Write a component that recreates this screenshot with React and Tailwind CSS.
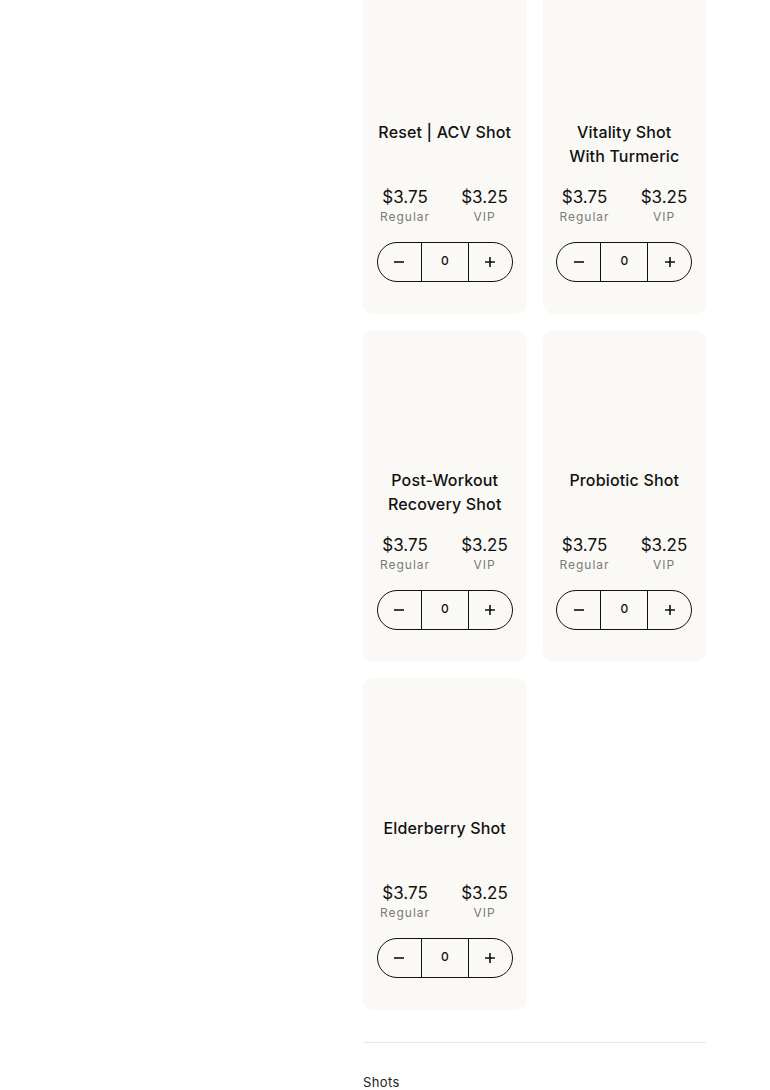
import React from "react";

const products = [
  { name: "Reset | ACV Shot" },
  { name: "Vitality Shot With Turmeric" },
  { name: "Post-Workout Recovery Shot" },
  { name: "Probiotic Shot" },
  { name: "Elderberry Shot" },
];

function Card({ name }) {
  return (
    <div className="flex h-[332px] flex-col items-center rounded-[10px] bg-[#faf9f6] px-[14px]">
      <div className="h-[138px] w-full shrink-0" />
      <div className="flex h-[48px] w-full items-start justify-center text-center text-[16px] font-medium leading-[24px] tracking-[0.01em] text-balance text-[#111]">
        {name}
      </div>
      <div className="mt-[19px] flex w-full justify-between px-[5px]">
        <div className="flex w-[46px] flex-col items-center">
          <span className="text-[17px] leading-[20px] text-[#111]">$3.75</span>
          <span className="text-[12px] leading-[20px] tracking-[0.08em] text-[#7a7a7a]">Regular</span>
        </div>
        <div className="flex w-[46px] flex-col items-center">
          <span className="text-[17px] leading-[20px] text-[#111]">$3.25</span>
          <span className="text-[12px] leading-[20px] tracking-[0.08em] text-[#7a7a7a]">VIP</span>
        </div>
      </div>
      <div className="mt-[15px] flex h-[40px] w-[136px] items-stretch rounded-full border border-[#111]">
        <button className="flex w-[44px] items-center justify-center border-r border-[#111]">
          <svg width="12" height="12" viewBox="0 0 12 12"><path d="M1 6h10" stroke="#111" strokeWidth="1.6" /></svg>
        </button>
        <div className="flex w-[46px] items-center justify-center pb-[3px] text-[12px] font-medium text-[#111]">0</div>
        <button className="flex flex-1 items-center justify-center border-l border-[#111]">
          <svg width="12" height="12" viewBox="0 0 12 12"><path d="M1 6h10M6 1v10" stroke="#111" strokeWidth="1.6" /></svg>
        </button>
      </div>
    </div>
  );
}

export default function App() {
  return (
    <div className="min-h-[1090px] overflow-hidden bg-white" style={{ fontFamily: "Inter, 'Noto Sans', sans-serif" }}>
      <div className="-mt-[18px] flex">
        <div className="w-[363px] shrink-0" />
        <div className="w-[343px]">
          <div className="grid grid-cols-2 gap-4">
            {products.map((p) => (
              <Card key={p.name} name={p.name} />
            ))}
          </div>
          <div className="mt-[32px] h-px bg-[#e6e6e6]" />
          <div className="mt-[30px] text-[13px] tracking-[0.03em] text-[#222]">Shots</div>
        </div>
      </div>
    </div>
  );
}
